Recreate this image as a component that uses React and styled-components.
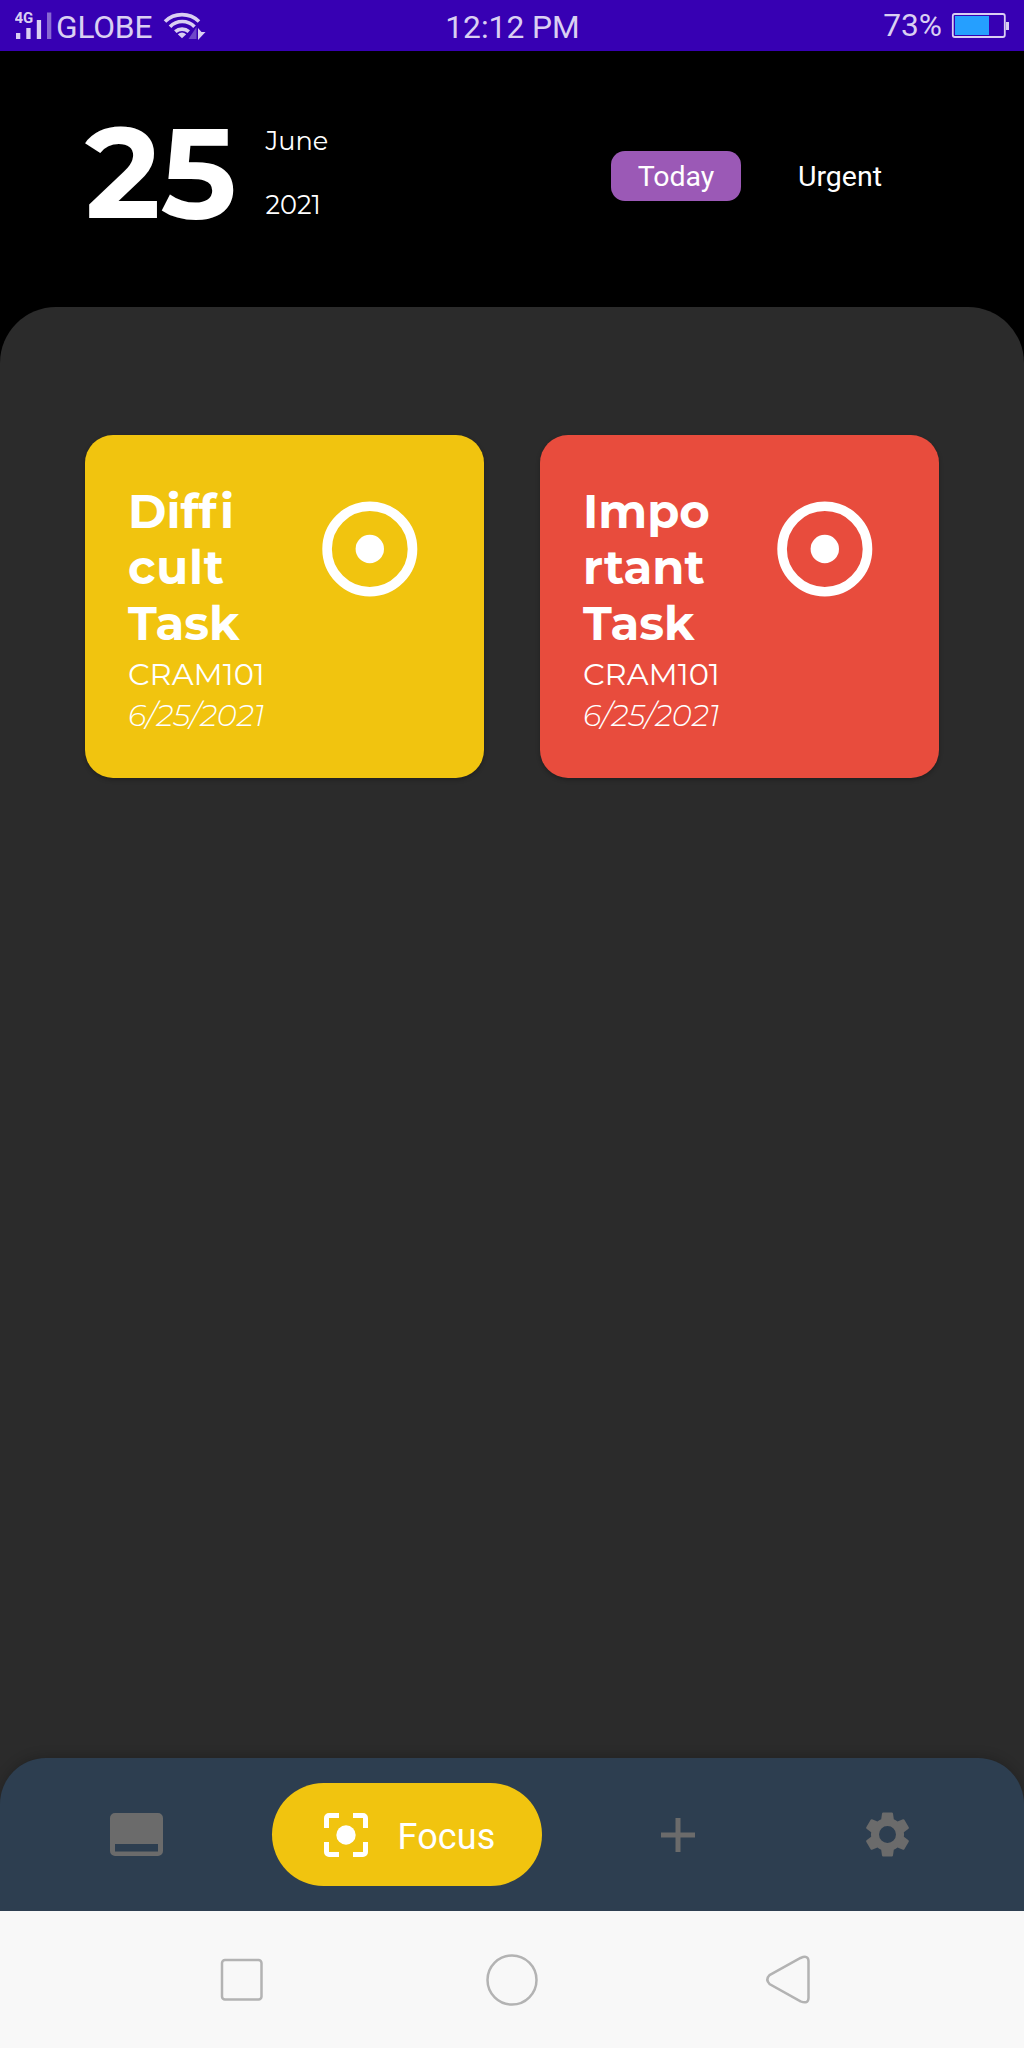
import React from "react";
import styled, { createGlobalStyle } from "styled-components";

const GlobalStyle = createGlobalStyle`
  * { box-sizing: border-box; }
  body { margin: 0; background: #000; font-family: Roboto, "Liberation Sans", sans-serif; }
  svg { display: block; flex: none; }
`;

const Screen = styled.div`
  width: 1024px;
  height: 2048px;
  display: flex;
  flex-direction: column;
  background: #000;
  overflow: hidden;
`;

const StatusBar = styled.header`
  height: 51px;
  flex: none;
  display: grid;
  grid-template-columns: 1fr auto 1fr;
  align-items: start;
  padding: 0 14px 0 15px;
  background: #3700b3;
  color: #dacff2;
`;

const StatusGroup = styled.div`
  display: flex;
  gap: ${(p) => p.$gap || 0}px;
  justify-content: ${(p) => p.$align || "flex-start"};
`;

const StatusText = styled.span`
  font-size: 31.7px;
  line-height: 38px;
  padding-top: ${(p) => p.$top || 9}px;
  letter-spacing: ${(p) => p.$spacing || 0}px;
  white-space: nowrap;
`;

const Header = styled.section`
  height: 256px;
  flex: none;
  display: flex;
  justify-content: space-between;
  padding: 0 119px 0 85px;
  color: #fff;
`;

const DateBlock = styled.div`
  display: flex;
  font-family: Montserrat, Inter, sans-serif;
`;

const Day = styled.div`
  width: 180.5px;
  padding-top: 46px;
  font-size: 128px;
  line-height: 150px;
  font-weight: 700;
  white-space: nowrap;
`;

const MonthYear = styled.div`
  display: flex;
  flex-direction: column;
  gap: 32px;
  padding-top: 74px;
`;

const DateLine = styled.span`
  font-size: 25.6px;
  line-height: 32px;
`;

const Filters = styled.div`
  display: flex;
  align-items: flex-start;
  gap: 34px;
  padding-top: 100px;
`;

const Filter = styled.button`
  width: 130px;
  height: 50px;
  border: 0;
  border-radius: 14px;
  padding: 2px 0 0;
  background: ${(p) => (p.$active ? "#9b59b6" : "transparent")};
  color: #fff;
  font: 400 28.5px/40px Roboto, sans-serif;
`;

const Board = styled.main`
  flex: 1;
  background: #2b2b2b;
  border-radius: 56px 56px 0 0;
  padding: 128px 85px 0;
  display: flex;
  gap: 56px;
  align-items: flex-start;
`;

const Card = styled.article`
  width: 399px;
  height: 342.5px;
  border-radius: 28px;
  background: ${(p) => p.$color};
  box-shadow: 0 2px 4px rgba(0, 0, 0, 0.25);
  padding: 49px 66px 0 43px;
  display: flex;
  justify-content: space-between;
  color: #fff;
  font-family: Montserrat, Inter, sans-serif;
`;

const CardText = styled.div`
  display: flex;
  flex-direction: column;
  width: 150px;
`;

const Title = styled.h2`
  margin: 0;
  font-size: 46.6px;
  line-height: 56px;
  font-weight: 700;
  font-variant-ligatures: none;
`;

const TitleLine = styled.span`
  display: block;
  white-space: nowrap;
  letter-spacing: ${(p) => p.$spacing}px;
`;

const LooseLetter = styled.span`
  letter-spacing: 3.5px;
`;

const Course = styled.div`
  font-size: 30.5px;
  line-height: 41px;
  margin-top: 2px;
  white-space: nowrap;
`;

const Due = styled.div`
  font-size: 30.3px;
  line-height: 41px;
  font-style: italic;
  font-weight: 300;
  white-space: nowrap;
`;

const TargetIcon = styled.div`
  padding-top: 17px;
`;

const NavBase = styled.div`
  background: #2b2b2b;
  flex: none;
`;

const NavBar = styled.nav`
  height: 153px;
  background: #2d3e50;
  border-radius: 46px 46px 0 0;
  box-shadow: 0 -2px 12px rgba(0, 0, 0, 0.18);
  display: grid;
  grid-template-columns: 272px 270px 272px 146px 64px;
  align-items: center;
  color: #6b6b6b;
`;

const NavItem = styled.div`
  display: flex;
  justify-content: center;
`;

const FocusPill = styled.div`
  height: 103px;
  border-radius: 52px;
  background: #f1c40f;
  color: #fff;
  display: flex;
  align-items: center;
  padding-left: 52px;
  gap: 29.5px;
  font-size: 36px;
  line-height: 44px;
  letter-spacing: 0.1px;
`;

const PillLabel = styled.span`
  padding-top: 4px;
`;

const SystemBar = styled.footer`
  height: 137px;
  flex: none;
  background: #f8f8f8;
  display: flex;
  justify-content: space-between;
  align-items: center;
  padding: 0 214px 0 220px;
`;

const Signal = () => (
  <svg width="41" height="51" viewBox="15 0 41 51">
    <text x="14.5" y="23" fontSize="15" fontWeight="700" fontFamily="Roboto" fill="currentColor">4G</text>
    <path fill="currentColor" d="M16 33h4.3v6H16zM26.3 28h4.3v11h-4.3zM36.8 20h4.3v19h-4.3z" />
    <path fill="currentColor" opacity=".5" d="M47 12.5h4.3V39H47z" />
  </svg>
);

const Wifi = () => (
  <svg width="43" height="51" viewBox="163 0 43 51" fill="none" stroke="currentColor" strokeWidth="3.6">
    <path d="M165 21.5a24.5 24.5 0 0 1 34 0" />
    <path d="M170 26.7a17 17 0 0 1 24.5 0" />
    <path d="M175.3 31.7a10 10 0 0 1 13.5 0" />
    <path d="M177.8 34.3q4.2-3.4 8.4 0L182 38.3z" fill="currentColor" stroke="none" />
    <path d="M196.5 27v12h-8z" fill="currentColor" opacity=".35" stroke="none" />
    <path d="M198 28v12l7.5-8h-4z" fill="currentColor" stroke="none" />
  </svg>
);

const Battery = () => (
  <svg width="59" height="51" viewBox="951 0 59 51">
    <rect x="952.8" y="14" width="52" height="23" rx="2" fill="none" stroke="currentColor" strokeWidth="1.8" />
    <path d="M955 16h34v19h-34z" fill="#259fff" />
    <path d="M1006 22h3v8h-3z" fill="currentColor" />
  </svg>
);

const Target = () => (
  <svg width="96" height="96" viewBox="0 0 96 96">
    <circle cx="47.8" cy="48" r="42.7" fill="none" stroke="#fff" strokeWidth="9.6" />
    <circle cx="47.8" cy="48" r="14.2" fill="#fff" />
  </svg>
);

const tasks = [
  {
    color: "#f1c40f",
    lines: [
      { key: "a", text: <>Dif<LooseLetter>f</LooseLetter>i</>, spacing: 0 },
      { key: "b", text: "cult", spacing: 0.7 },
      { key: "c", text: "Task", spacing: 0 },
    ],
  },
  {
    color: "#e84c3d",
    lines: [
      { key: "a", text: "Impo", spacing: 0 },
      { key: "b", text: "rtant", spacing: 0.1 },
      { key: "c", text: "Task", spacing: 0 },
    ],
  },
];

export default function App() {
  return (
    <Screen>
      <GlobalStyle />
      <StatusBar>
        <StatusGroup>
          <Signal />
          <StatusGroup $gap={11}>
            <StatusText $spacing={-0.2}>GLOBE</StatusText>
            <Wifi />
          </StatusGroup>
        </StatusGroup>
        <StatusText>12:12 PM</StatusText>
        <StatusGroup $align="flex-end" $gap={9}>
          <StatusText $top={7}>73%</StatusText>
          <Battery />
        </StatusGroup>
      </StatusBar>
      <Header>
        <DateBlock>
          <Day>25</Day>
          <MonthYear>
            <DateLine>June</DateLine>
            <DateLine>2021</DateLine>
          </MonthYear>
        </DateBlock>
        <Filters>
          <Filter $active>Today</Filter>
          <Filter>Urgent</Filter>
        </Filters>
      </Header>
      <Board>
        {tasks.map((t) => (
          <Card key={t.color} $color={t.color}>
            <CardText>
              <Title>
                {t.lines.map((l) => (
                  <TitleLine key={l.key} $spacing={l.spacing}>{l.text}</TitleLine>
                ))}
              </Title>
              <Course>CRAM101</Course>
              <Due>6/25/2021</Due>
            </CardText>
            <TargetIcon><Target /></TargetIcon>
          </Card>
        ))}
      </Board>
      <NavBase>
        <NavBar>
          <NavItem>
            <svg width="53" height="43" viewBox="0 0 53 43">
              <path fill="currentColor" fillRule="evenodd" d="M5 0h43a5 5 0 0 1 5 5v33a5 5 0 0 1-5 5H5a5 5 0 0 1-5-5V5a5 5 0 0 1 5-5zM5 31v7.5h43V31z" />
            </svg>
          </NavItem>
          <FocusPill>
            <svg width="44" height="44" viewBox="0 0 44 44">
              <path fill="none" stroke="#fff" strokeWidth="5" d="M2.5 15V5a2.5 2.5 0 0 1 2.5-2.5h10M29 2.5h10A2.5 2.5 0 0 1 41.5 5v10M41.5 29v10a2.5 2.5 0 0 1-2.5 2.5H29M15 41.5H5A2.5 2.5 0 0 1 2.5 39V29" />
              <circle cx="22" cy="22" r="9.7" fill="#fff" />
            </svg>
            <PillLabel>Focus</PillLabel>
          </FocusPill>
          <NavItem>
            <svg width="34" height="34" viewBox="0 0 34 34">
              <path d="M17 0v34M0 17h34" stroke="currentColor" strokeWidth="5" />
            </svg>
          </NavItem>
          <NavItem>
            <svg width="55" height="55" viewBox="0 0 24 24">
              <path fill="currentColor" d="M19.14 12.94c.04-.3.06-.61.06-.94 0-.32-.02-.64-.07-.94l2.03-1.58c.18-.14.23-.41.12-.61l-1.92-3.32c-.12-.22-.37-.29-.59-.22l-2.39.96c-.5-.38-1.03-.7-1.62-.94l-.36-2.54c-.04-.24-.24-.41-.48-.41h-3.84c-.24 0-.43.17-.47.41l-.36 2.54c-.59.24-1.13.57-1.62.94l-2.39-.96c-.22-.08-.47 0-.59.22L2.74 8.87c-.12.21-.08.47.12.61l2.03 1.58c-.05.3-.09.63-.09.94s.02.64.07.94l-2.03 1.58c-.18.14-.23.41-.12.61l1.92 3.32c.12.22.37.29.59.22l2.39-.96c.5.38 1.03.7 1.62.94l.36 2.54c.05.24.24.41.48.41h3.84c.24 0 .44-.17.47-.41l.36-2.54c.59-.24 1.13-.56 1.62-.94l2.39.96c.22.08.47 0 .59-.22l1.92-3.32c.12-.22.07-.47-.12-.61zM12 15.7a3.7 3.7 0 1 1 0-7.4 3.7 3.7 0 0 1 0 7.4z" />
            </svg>
          </NavItem>
        </NavBar>
      </NavBase>
      <SystemBar>
        <svg width="43" height="43" viewBox="0 0 43 43">
          <rect x="2" y="2" width="39.5" height="39.5" rx="3" fill="none" stroke="#b3b3b3" strokeWidth="2.5" />
        </svg>
        <svg width="52" height="52" viewBox="0 0 52 52">
          <circle cx="26" cy="26" r="24.5" fill="none" stroke="#b3b3b3" strokeWidth="2.5" />
        </svg>
        <svg width="49" height="50" viewBox="-5 0 49 50">
          <path d="M3.5 20.2 34.5 3Q42.3 -.3 42.5 6V43Q42.300 49.500 34.5 46.300L3.5 29Q-.8 24.600 3.5 20.2Z" fill="none" stroke="#b3b3b3" strokeWidth="2.5" />
        </svg>
      </SystemBar>
    </Screen>
  );
}
